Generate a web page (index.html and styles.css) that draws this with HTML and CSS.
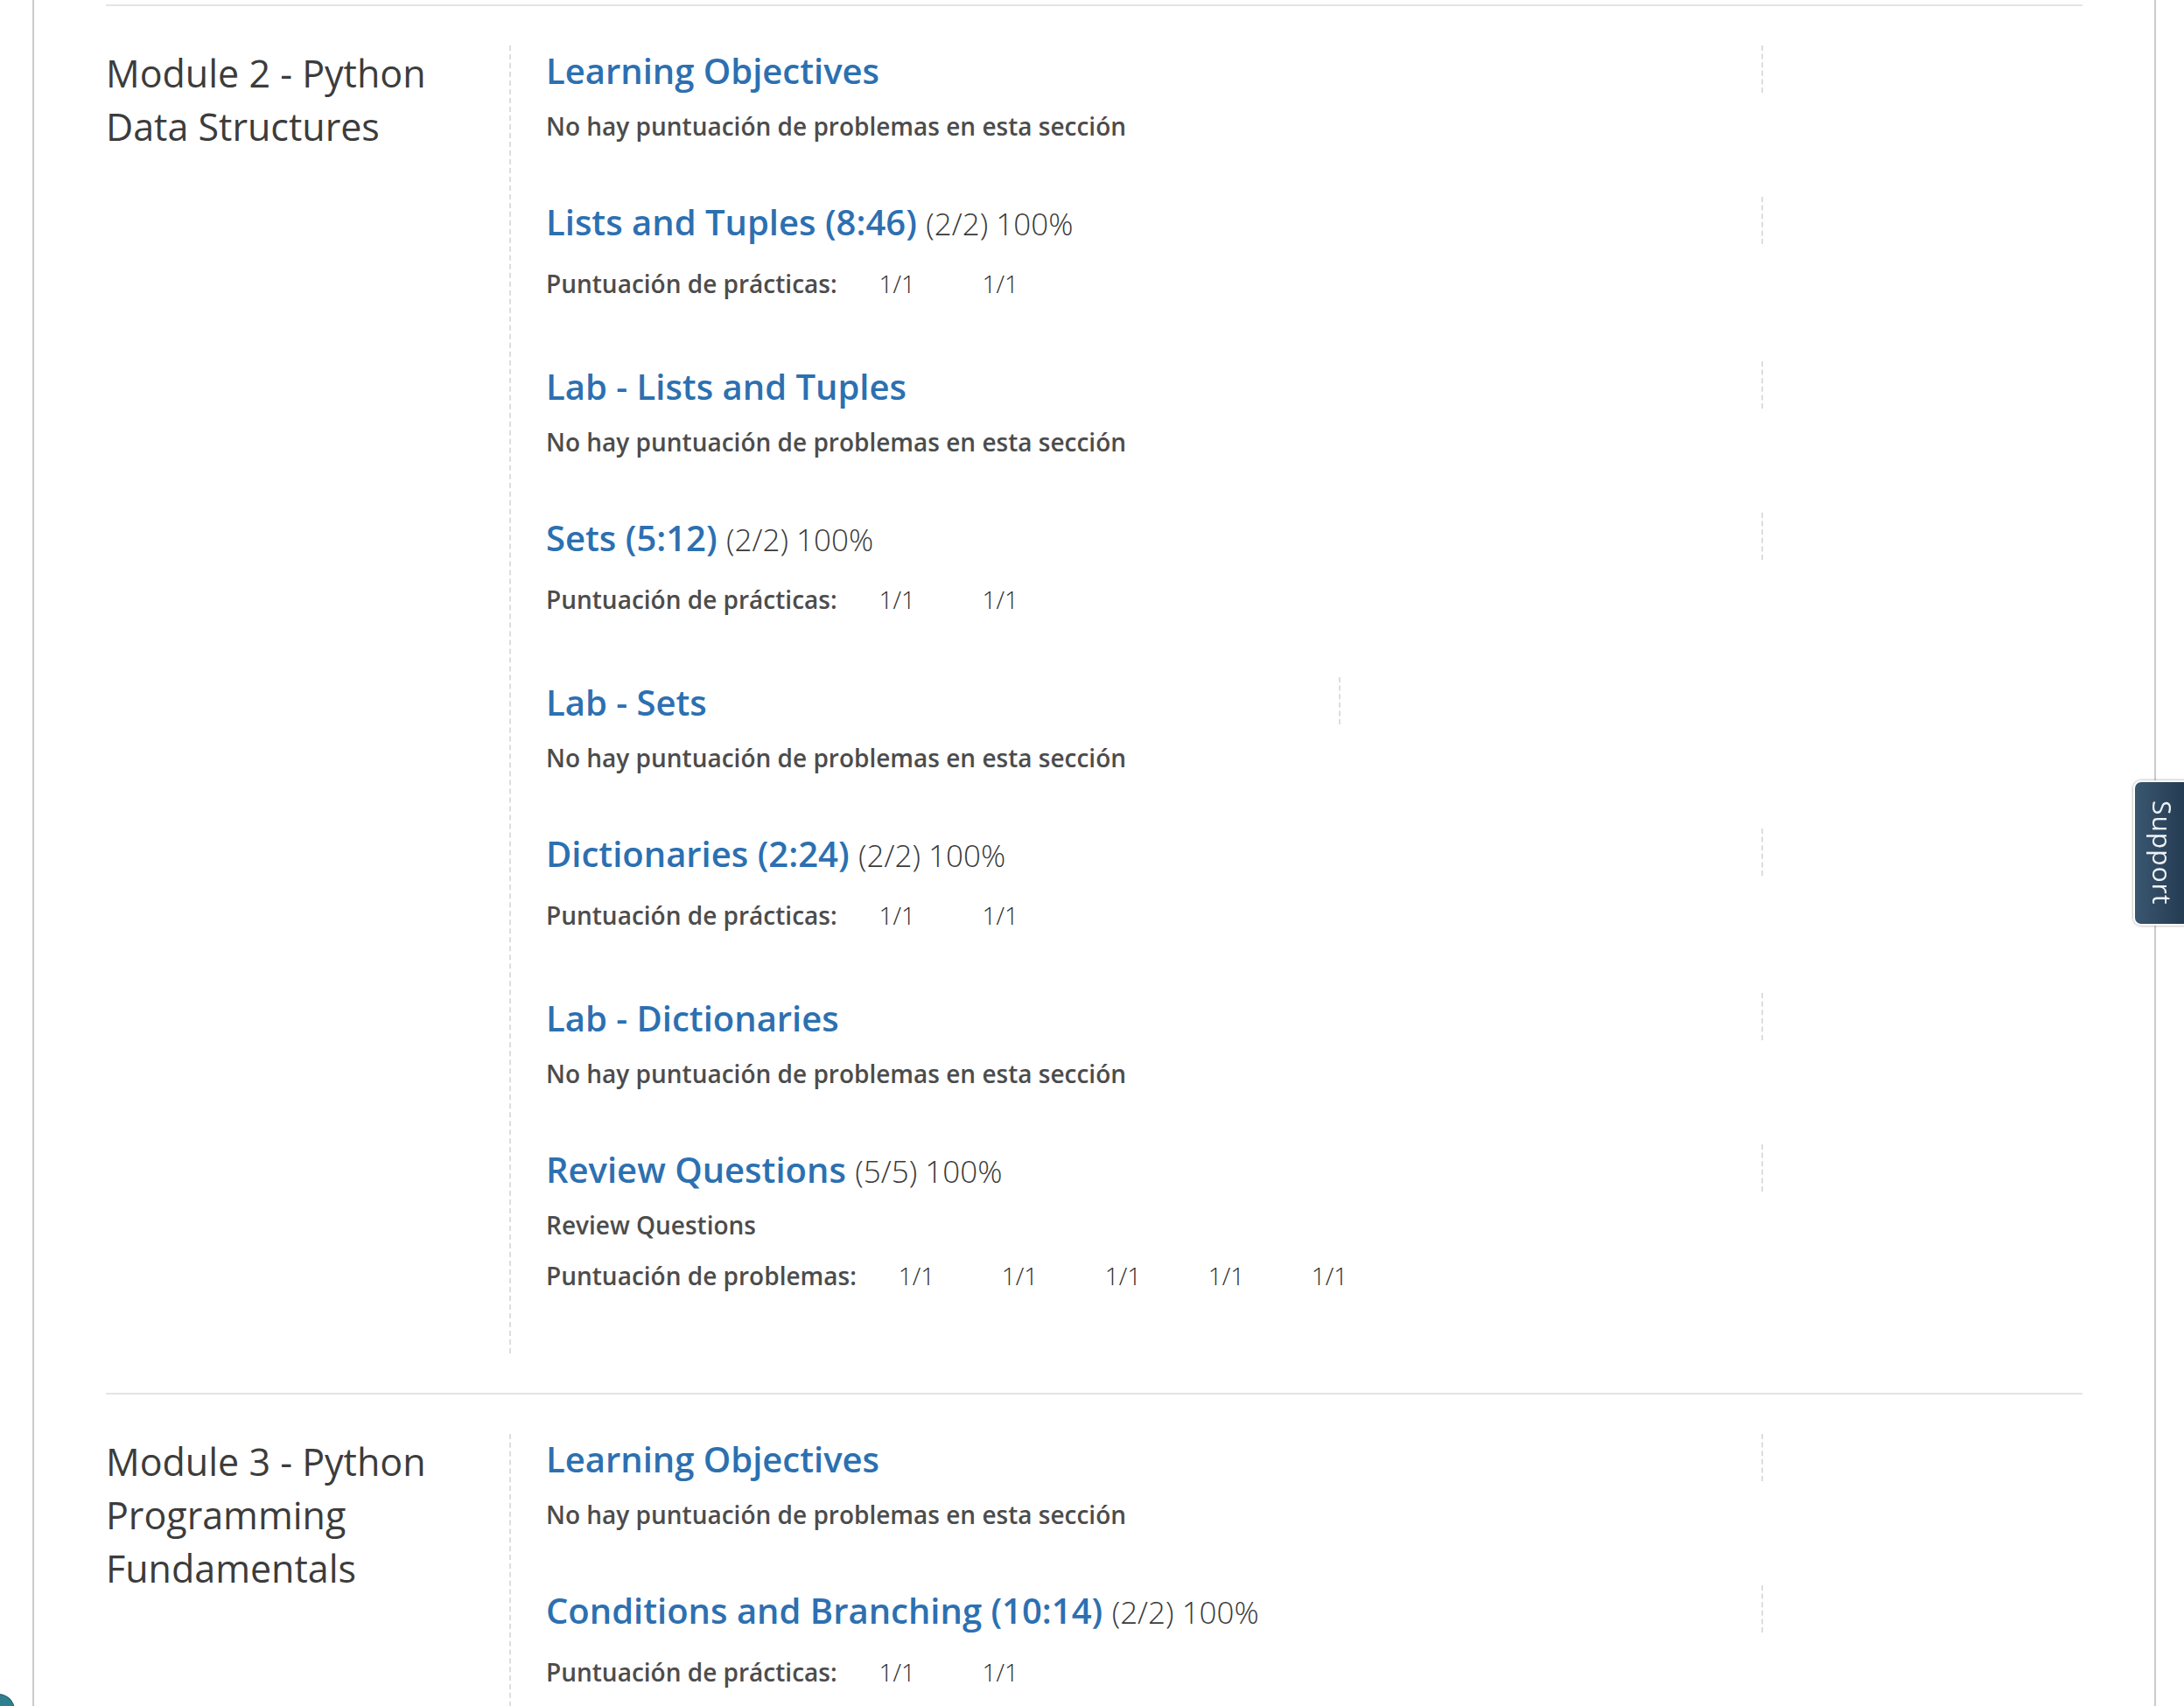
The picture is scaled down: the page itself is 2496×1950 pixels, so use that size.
FILE: index.html
```html
<!DOCTYPE html>
<html lang="es">
<head>
<meta charset="utf-8">
<title>Progreso del curso</title>
<link rel="stylesheet" href="styles.css">
</head>
<body>
<div class="page">
  <main class="progress">
    <section class="chapter">
      <h2 class="chapter-title">Module 2 - Python Data Structures</h2>
      <div class="sections">
        <div class="item">
          <div class="item-head"><h3 class="item-title"><a href="#">Learning Objectives</a></h3></div>
          <p class="item-sub">No hay puntuación de problemas en esta sección</p>
        </div>
        <div class="item">
          <div class="item-head"><h3 class="item-title"><a href="#">Lists and Tuples (8:46)</a> <span class="item-pct">(2/2) 100%</span></h3></div>
          <div class="scores"><span class="score-label">Puntuación de prácticas:</span><span class="score">1/1</span><span class="score">1/1</span></div>
        </div>
        <div class="item">
          <div class="item-head"><h3 class="item-title"><a href="#">Lab - Lists and Tuples</a></h3></div>
          <p class="item-sub">No hay puntuación de problemas en esta sección</p>
        </div>
        <div class="item">
          <div class="item-head"><h3 class="item-title"><a href="#">Sets (5:12)</a> <span class="item-pct">(2/2) 100%</span></h3></div>
          <div class="scores"><span class="score-label">Puntuación de prácticas:</span><span class="score">1/1</span><span class="score">1/1</span></div>
        </div>
        <div class="item">
          <div class="item-head item-head--narrow"><h3 class="item-title"><a href="#">Lab - Sets</a></h3></div>
          <p class="item-sub">No hay puntuación de problemas en esta sección</p>
        </div>
        <div class="item">
          <div class="item-head"><h3 class="item-title"><a href="#">Dictionaries (2:24)</a> <span class="item-pct">(2/2) 100%</span></h3></div>
          <div class="scores"><span class="score-label">Puntuación de prácticas:</span><span class="score">1/1</span><span class="score">1/1</span></div>
        </div>
        <div class="item">
          <div class="item-head"><h3 class="item-title"><a href="#">Lab - Dictionaries</a></h3></div>
          <p class="item-sub">No hay puntuación de problemas en esta sección</p>
        </div>
        <div class="item">
          <div class="item-head"><h3 class="item-title"><a href="#">Review Questions</a> <span class="item-pct">(5/5) 100%</span></h3></div>
          <p class="item-sub">Review Questions</p>
          <div class="scores"><span class="score-label">Puntuación de problemas:</span><span class="score">1/1</span><span class="score">1/1</span><span class="score">1/1</span><span class="score">1/1</span><span class="score">1/1</span></div>
        </div>
      </div>
    </section>
    <section class="chapter">
      <h2 class="chapter-title">Module 3 - Python Programming Fundamentals</h2>
      <div class="sections">
        <div class="item">
          <div class="item-head"><h3 class="item-title"><a href="#">Learning Objectives</a></h3></div>
          <p class="item-sub">No hay puntuación de problemas en esta sección</p>
        </div>
        <div class="item">
          <div class="item-head"><h3 class="item-title"><a href="#">Conditions and Branching (10:14)</a> <span class="item-pct">(2/2) 100%</span></h3></div>
          <div class="scores"><span class="score-label">Puntuación de prácticas:</span><span class="score">1/1</span><span class="score">1/1</span></div>
        </div>
      </div>
    </section>
  </main>
</div>
<a class="support-tab" href="#">Support</a>
<div class="corner-widget"></div>
</body>
</html>
```

FILE: styles.css
```css
html, body {
  margin: 0;
  padding: 0;
  background: #ffffff;
}

html {
  overflow: hidden;
}

body {
  font-family: "Open Sans", "Liberation Sans", sans-serif;
  color: #333333;
  height: 1950px;
  overflow: hidden;
}

.page {
  box-sizing: border-box;
  margin-left: 37px;
  width: 2427px;
  height: 1950px;
  overflow: hidden;
  border-left: 2px solid #cbcbcb;
  border-right: 2px solid #cbcbcb;
  padding: 5px 82px 0;
}

.chapter {
  display: flex;
  border-top: 2px solid #e4e4e4;
  padding: 45px 0;
}

.chapter-title {
  flex: 0 0 461px;
  width: 461px;
  margin: 0;
  padding-top: 1px;
  font-size: 43px;
  line-height: 61px;
  font-weight: 400;
  color: #3c3c3c;
}

.sections {
  flex: 1;
  border-left: 2px dashed #dddddd;
  padding-left: 40px;
}

.item {
  padding-bottom: 64px;
}

.item-head {
  box-sizing: border-box;
  width: 1391px;
  height: 54px;
  padding-top: 3px;
  border-right: 2px dashed #dddddd;
}

.item-head--narrow {
  width: 908px;
}

.item-title {
  margin: 0;
  font-size: 40px;
  line-height: 51px;
  font-weight: 600;
  white-space: nowrap;
}

.item-title a {
  color: #2c70b1;
  text-decoration: none;
}

.item-pct {
  font-size: 35px;
  font-weight: 300;
  color: #3a3a3a;
}

.item-sub {
  margin: 22px 0 0;
  font-size: 28px;
  line-height: 33px;
  font-weight: 600;
  color: #4c4c4c;
}

.scores {
  display: flex;
  margin-top: 20px;
  font-size: 28px;
  line-height: 50px;
}

.item-sub + .scores {
  margin-top: 16px;
}

.score-label {
  font-weight: 600;
  color: #4c4c4c;
  margin-right: 48px;
}

.score {
  width: 118px;
  font-weight: 300;
  color: #2e2e2e;
}

.support-tab {
  position: fixed;
  top: 892px;
  right: -8px;
  box-sizing: border-box;
  width: 66px;
  height: 166px;
  display: flex;
  align-items: center;
  justify-content: center;
  border: 2px solid #ffffff;
  border-radius: 9px 0 0 9px;
  background: linear-gradient(to right, #3a5670, #22394f);
  box-shadow: 0 0 3px rgba(0, 0, 0, 0.45);
  writing-mode: vertical-rl;
  font-family: "Open Sans", "Liberation Sans", sans-serif;
  font-size: 30px;
  color: #eef1f4;
  text-decoration: none;
  letter-spacing: 1px;
}

.corner-widget {
  position: fixed;
  left: -34px;
  top: 1937px;
  width: 50px;
  height: 40px;
  background: #2f7f8f;
  border-radius: 0 18px 0 0;
  box-shadow: 0 0 0 1px #1f5a66;
}
```
